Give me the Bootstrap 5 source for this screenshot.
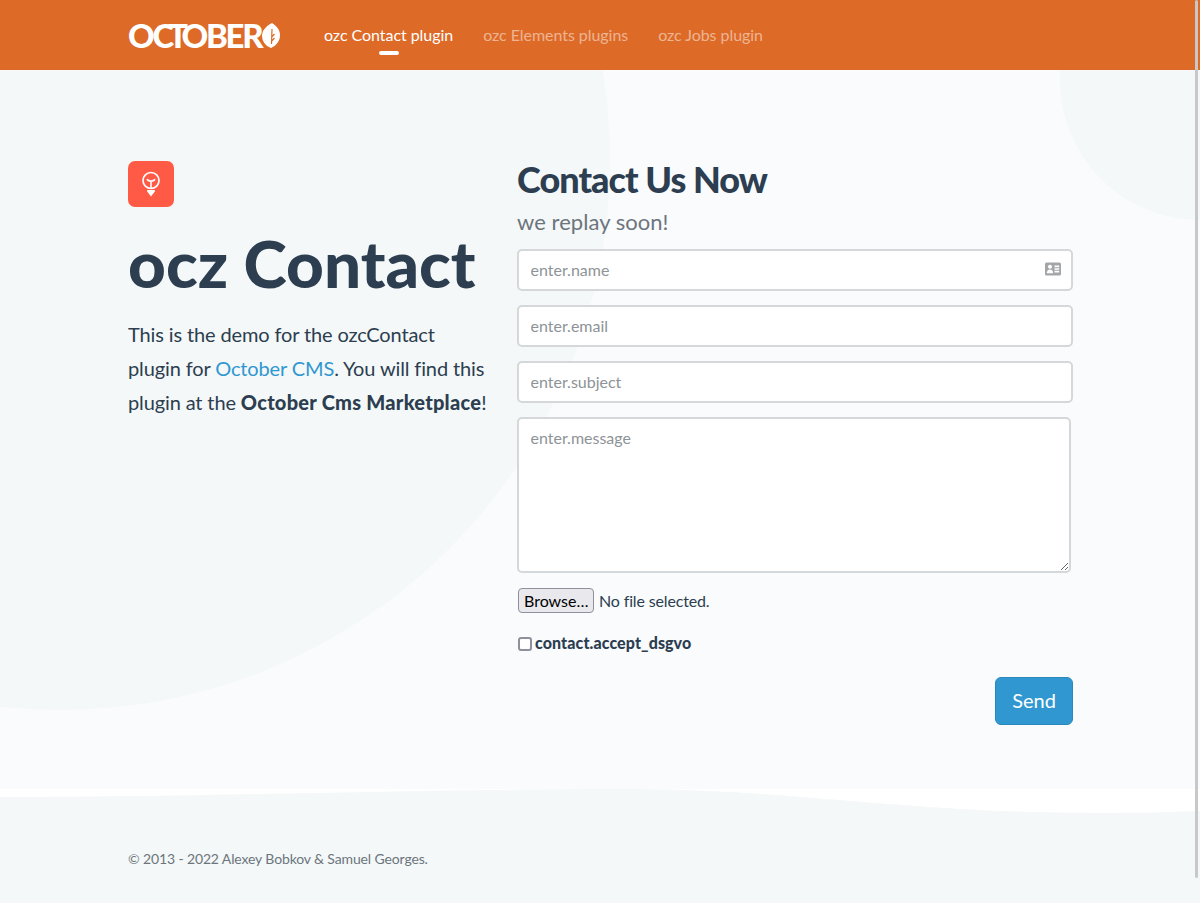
<!DOCTYPE html>
<html lang="en">
<head>
  <meta charset="UTF-8" />
  <meta name="viewport" content="width=device-width, initial-scale=1.0" />
  <title>ozc Contact</title>
  <link href="https://cdn.jsdelivr.net/npm/bootstrap@5.3.0/dist/css/bootstrap.min.css" rel="stylesheet">
  <style>
    html { overflow: hidden; }
    body {
      font-family: Lato, sans-serif;
      background-color: #f9fbfd;
      color: #2c3e50;
      height: 903px;
      overflow: hidden;
      position: relative;
    }
    .page-bg { position: absolute; left: 0; top: 0; z-index: 0; }
    .top-bar { background: #dd6a26; height: 70px; position: relative; z-index: 1; }
    .bar-inner { padding-left: 128px; padding-right: 128px; }
    .brand-mark {
      font-family: Lato, sans-serif;
      font-weight: 900;
      font-size: 33px;
      letter-spacing: -2.3px;
      line-height: 1;
      color: #fff;
      width: 152px;
      margin-right: 44px;
      text-decoration: none;
    }
    .brand-mark:hover { color: #fff; }
    .brand-t { margin: 0 -4px; }
    .top-links { gap: 30px; letter-spacing: -.05px; }
    .top-links a {
      color: rgba(255, 255, 255, .5);
      font-size: 16px;
      line-height: 70px;
      text-decoration: none;
      display: block;
      position: relative;
    }
    .top-links a.on { color: #fff; }
    .top-links a.on::after {
      content: "";
      position: absolute;
      left: 50%;
      bottom: 15px;
      width: 20px;
      height: 4px;
      margin-left: -10px;
      border-radius: 2px;
      background: #fff;
    }
    .main-area { position: relative; z-index: 1; padding: 91px 128px 0; height: 719px; }
    .intro-col { flex: 0 0 389px; width: 389px; }
    .form-col { flex: 0 0 556px; width: 556px; }
    .bulb-box {
      width: 46px;
      height: 46px;
      background: #ff5a45;
      border-radius: 7px;
    }
    .intro-title {
      font-size: 65.6px;
      font-weight: 900;
      color: #2c3e50;
      line-height: 70px;
      margin: 21px 0 19px;
    }
    .intro-text { font-size: 20px; line-height: 34px; margin: 0; max-width: 361px; letter-spacing: -.13px; }
    .intro-text a { color: #3097d1; text-decoration: none; }
    .intro-text strong { font-weight: 900; letter-spacing: .25px; }
    .form-title { font-size: 36px; font-weight: 900; line-height: 40px; margin: -2px 0 10px; color: #2c3e50; letter-spacing: -.95px; }
    .form-sub { font-size: 22px; line-height: 26px; color: #6c757d; margin: 0 0 14px; letter-spacing: .05px; }
    .field {
      height: 42px;
      border: 2px solid #d5d8da;
      border-radius: 5px;
      font-size: 16px;
      padding: 0 11.5px 2px;
      margin-bottom: 14px;
      color: #2c3e50;
      box-shadow: none;
    }
    .field::placeholder { color: #8e9397; }
    textarea.field { height: 156px; width: 554px; padding-top: 7px; margin-bottom: 15px; }
    .field-icon { position: absolute; right: 12px; top: 13px; }
    .file-row { font-size: 16px; line-height: 24px; margin-bottom: 18px; letter-spacing: -.15px; }
    .fake-browse {
      font-family: Lato, sans-serif;
      font-size: 16px;
      line-height: 20px;
      color: #000;
      background: #e9e9ed;
      border: 1px solid #8f8f9d;
      border-radius: 4px;
      padding: 1px 5px;
      height: 25px;
      width: 76px;
      margin-left: 1px;
      margin-right: 5px;
    }
    .check-row { font-size: 16px; font-weight: 900; line-height: 24px; letter-spacing: .1px; }
    .check-row input {
      appearance: none;
      box-sizing: border-box;
      width: 14px;
      height: 14px;
      margin: 1px 3px 0 1px;
      border: 2px solid #8f8f9d;
      border-radius: 3px;
      background: #fff;
    }
    .send-btn {
      background: #3097d1;
      border-color: #2a88bd;
      color: #fff;
      font-size: 20px;
      width: 78px;
      height: 48px;
      border-radius: 6px;
      padding: 0 0 2px;
    }
    .send-btn:hover { background: #2a88bd; color: #fff; }
    .send-row { margin-top: 22px; }
    .bottom-bar { position: relative; z-index: 1; padding: 59px 128px 0; font-size: 14px; color: #6c757d; letter-spacing: -.13px; }
    .scroll-thumb {
      position: absolute;
      z-index: 2;
      right: 2px;
      top: 0;
      width: 3px;
      height: 878px;
      background: #c8c8c8;
      border-radius: 2px;
    }
  </style>
</head>
<body>
  <svg class="page-bg" width="1200" height="903" viewBox="0 0 1200 903" aria-hidden="true">
    <circle cx="60" cy="160" r="550" fill="#f4f8f8"/>
    <circle cx="1200" cy="80" r="140" fill="#f4f8f8"/>
    <rect x="0" y="789" width="1200" height="114" fill="#fff"/>
    <path d="M0 797 C200 797 420 789 620 789 C800 789 900 813 1100 813 C1140 813 1170 812 1200 811 L1200 903 L0 903 Z" fill="#f4f8f8"/>
  </svg>

  <nav class="top-bar d-flex align-items-center bar-inner">
    <a class="brand-mark d-flex align-items-center" href="#"><span>OC<span class="brand-t">T</span>OBER</span><svg width="18" height="25" viewBox="0 0 18 25" class="flex-shrink-0 ms-auto"><path d="M10 0 C16 4 18 8 18 12.5 C18 18 14 23 9 25 C3 23 0 18 0 12.5 C0 8 4 3 10 0 Z" fill="#fff"/><path d="M10 6 L9.5 21 M9.6 14 L12.5 11 M9.7 18 L12.5 15" stroke="#dd6a26" stroke-width="1.2" fill="none"/></svg></a>
    <div class="top-links d-flex">
      <a class="on" href="#">ozc Contact plugin</a>
      <a href="#">ozc Elements plugins</a>
      <a href="#">ozc Jobs plugin</a>
    </div>
  </nav>

  <main class="main-area d-flex">
    <section class="intro-col">
      <div class="bulb-box d-flex align-items-center justify-content-center">
        <svg width="20" height="26" viewBox="0 0 20 26" fill="none" stroke="#fff">
          <circle cx="10" cy="9.5" r="8" stroke-width="1.7"/>
          <path d="M6.2 8 C6.8 10.8 13.2 10.8 13.8 8 M10 10 V17" stroke-width="1.6"/>
          <path d="M6.2 19 H13.8 V20.5 L10 25.5 L6.2 20.5 Z" fill="#fff" stroke="none"/>
        </svg>
      </div>
      <h1 class="intro-title">ocz Contact</h1>
      <p class="intro-text">This is the demo for the ozcContact plugin for <a href="#">October CMS</a>. You will find this plugin at the <strong>October Cms Marketplace</strong>!</p>
    </section>
    <section class="form-col">
      <h2 class="form-title">Contact Us Now</h2>
      <p class="form-sub">we replay soon!</p>
      <form>
        <div class="position-relative">
          <input class="form-control field" type="text" placeholder="enter.name">
          <svg class="field-icon" width="16" height="14" viewBox="0 0 16 14">
            <path fill-rule="evenodd" fill="#a3a6a8" d="M1.5 0.5 H14.5 A1.5 1.5 0 0 1 16 2 V12 A1.5 1.5 0 0 1 14.5 13.5 H1.5 A1.5 1.5 0 0 1 0 12 V2 A1.5 1.5 0 0 1 1.5 0.5 Z M5 2.8 A2 2 0 1 0 5 6.8 A2 2 0 1 0 5 2.8 Z M1.8 11.2 H8.2 C8.2 8.8 6.8 7.4 5 7.4 C3.2 7.4 1.8 8.8 1.8 11.2 Z M9.5 3.6 V5.2 H14.2 V3.6 Z M9.5 6.2 V7.8 H14.2 V6.2 Z M9.5 8.8 V10.4 H14.2 V8.8 Z"/>
          </svg>
        </div>
        <input class="form-control field" type="email" placeholder="enter.email">
        <input class="form-control field" type="text" placeholder="enter.subject">
        <textarea class="form-control field" placeholder="enter.message"></textarea>
        <div class="file-row d-flex align-items-center">
          <button type="button" class="fake-browse">Browse…</button>
          <span>No file selected.</span>
        </div>
        <label class="check-row d-flex align-items-center"><input type="checkbox">contact.accept_dsgvo</label>
        <div class="d-flex justify-content-end send-row">
          <button type="button" class="btn send-btn">Send</button>
        </div>
      </form>
    </section>
  </main>

  <footer class="bottom-bar">© 2013 - 2022 Alexey Bobkov &amp; Samuel Georges.</footer>
  <div class="scroll-thumb"></div>
  <script src="https://cdn.jsdelivr.net/npm/bootstrap@5.3.0/dist/js/bootstrap.bundle.min.js"></script>
</body>
</html>
